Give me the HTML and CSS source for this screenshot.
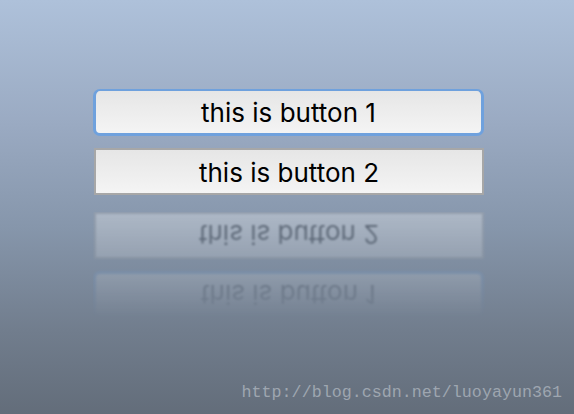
FILE: index.html
```html
<!DOCTYPE html>
<html>
<head>
<meta charset="utf-8">
<link rel="stylesheet" href="styles.css">
</head>
<body>
<main class="stage">
  <div class="group">
    <button class="btn btn-focus">this is button 1</button>
    <button class="btn btn-plain">this is button 2</button>
  </div>
  <div class="reflection" aria-hidden="true">
    <div class="group group-flip">
      <div class="btn btn-focus">this is button 1</div>
      <div class="btn btn-plain">this is button 2</div>
    </div>
  </div>
  <div class="watermark">http://blog.csdn.net/luoyayun361</div>
</main>
</body>
</html>
```
FILE: styles.css
```css
html, body {
  margin: 0;
  padding: 0;
}
body {
  width: 574px;
  height: 414px;
  overflow: hidden;
  background: linear-gradient(to bottom, #aec1da 0%, #9aaac2 30%, #8696ab 55%, #717d8d 80%, #636d7a 100%);
  font-family: Inter, "Noto Sans", sans-serif;
}
.stage {
  position: relative;
  width: 574px;
  height: 414px;
  padding: 89px 0 0 93px;
  box-sizing: border-box;
}
.group {
  display: flex;
  flex-direction: column;
  gap: 12px;
  width: 391px;
}
.btn {
  box-sizing: border-box;
  height: 47px;
  margin: 0;
  display: flex;
  align-items: center;
  justify-content: center;
  font-family: Inter, "Noto Sans", sans-serif;
  font-size: 26px;
  color: #000;
  background: linear-gradient(to bottom, #e6e6e6 0%, #f4f4f4 100%);
  padding: 1px 0 0;
}
.btn-focus {
  border: 3px solid #6fa1dd;
  border-top-width: 2px;
  border-radius: 7px;
}
.btn-plain {
  border: 2px solid #a7a7a7;
  border-radius: 0;
  width: 390px;
  margin-left: 1px;
}
.reflection {
  margin-top: 17px;
  filter: blur(0.8px);
  opacity: 0.34;
  -webkit-mask-image: linear-gradient(to bottom, rgba(0,0,0,1) 0%, rgba(0,0,0,0.6) 45%, rgba(0,0,0,0) 100%);
  mask-image: linear-gradient(to bottom, rgba(0,0,0,1) 0%, rgba(0,0,0,0.6) 45%, rgba(0,0,0,0) 100%);
  height: 106px;
}
.group-flip {
  transform: scaleY(-1);
}
.watermark {
  position: absolute;
  right: 12px;
  bottom: 12px;
  font-family: "Liberation Mono", monospace;
  font-size: 16.7px;
  color: #9ea6b0;
}
```
